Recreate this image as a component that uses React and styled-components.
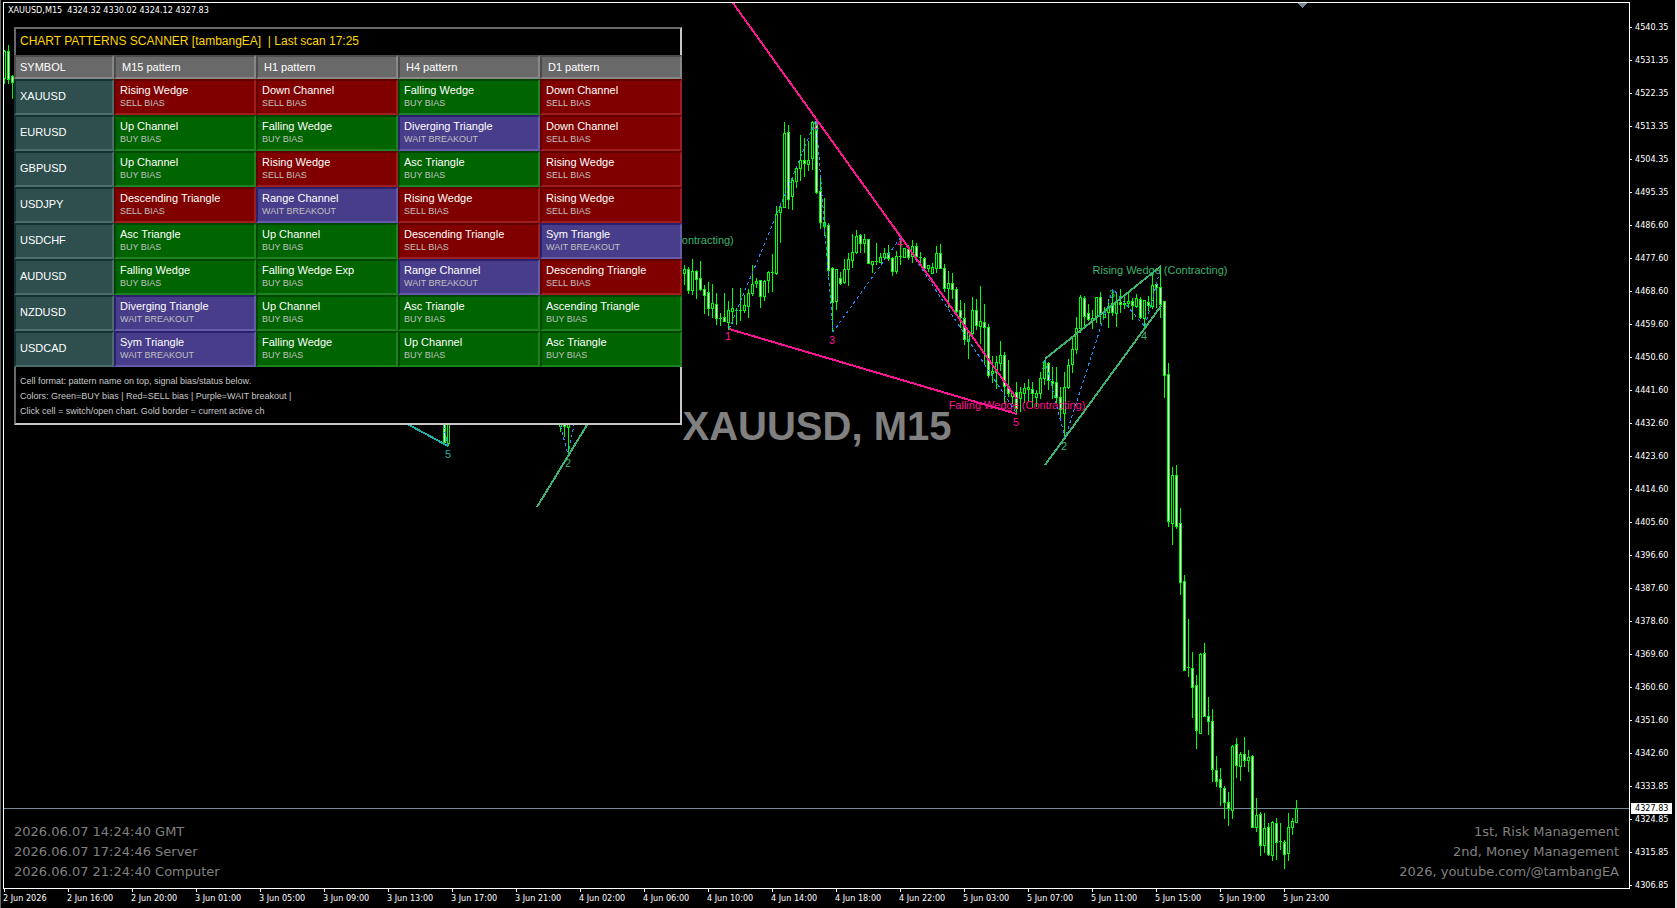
import styled, { createGlobalStyle } from 'styled-components';

const GlobalStyle = createGlobalStyle`
  * { box-sizing: border-box; }
  body { margin: 0; background: #000; }
`;

// background, dark edge (top/left), light edge (right/bottom)
const tones = {
  head: ['#696969', '#4b4b4b', '#878787'],
  symbol: ['#2f4f4f', '#113131', '#4d6d6d'],
  sell: ['#800000', '#620000', '#9e1e1e'],
  buy: ['#006400', '#004600', '#1e821e'],
  wait: ['#483d8b', '#2a1f6d', '#665ba9'],
};

const bias = { sell: 'SELL BIAS', buy: 'BUY BIAS', wait: 'WAIT BREAKOUT' };

const rows = [
  ['XAUUSD', ['Rising Wedge', 'sell'], ['Down Channel', 'sell'], ['Falling Wedge', 'buy'], ['Down Channel', 'sell']],
  ['EURUSD', ['Up Channel', 'buy'], ['Falling Wedge', 'buy'], ['Diverging Triangle', 'wait'], ['Down Channel', 'sell']],
  ['GBPUSD', ['Up Channel', 'buy'], ['Rising Wedge', 'sell'], ['Asc Triangle', 'buy'], ['Rising Wedge', 'sell']],
  ['USDJPY', ['Descending Triangle', 'sell'], ['Range Channel', 'wait'], ['Rising Wedge', 'sell'], ['Rising Wedge', 'sell']],
  ['USDCHF', ['Asc Triangle', 'buy'], ['Up Channel', 'buy'], ['Descending Triangle', 'sell'], ['Sym Triangle', 'wait']],
  ['AUDUSD', ['Falling Wedge', 'buy'], ['Falling Wedge Exp', 'buy'], ['Range Channel', 'wait'], ['Descending Triangle', 'sell']],
  ['NZDUSD', ['Diverging Triangle', 'wait'], ['Up Channel', 'buy'], ['Asc Triangle', 'buy'], ['Ascending Triangle', 'buy']],
  ['USDCAD', ['Sym Triangle', 'wait'], ['Falling Wedge', 'buy'], ['Up Channel', 'buy'], ['Asc Triangle', 'buy']],
];

const prices = [
  '4540.35', '4531.35', '4522.35', '4513.35', '4504.35', '4495.35', '4486.60', '4477.60', '4468.60',
  '4459.60', '4450.60', '4441.60', '4432.60', '4423.60', '4414.60', '4405.60', '4396.60', '4387.60',
  '4378.60', '4369.60', '4360.60', '4351.60', '4342.60', '4333.85', '4324.85', '4315.85', '4306.85',
];

const times = [
  '2 Jun 2026', '2 Jun 16:00', '2 Jun 20:00', '3 Jun 01:00', '3 Jun 05:00', '3 Jun 09:00', '3 Jun 13:00',
  '3 Jun 17:00', '3 Jun 21:00', '4 Jun 02:00', '4 Jun 06:00', '4 Jun 10:00', '4 Jun 14:00', '4 Jun 18:00',
  '4 Jun 22:00', '5 Jun 03:00', '5 Jun 07:00', '5 Jun 11:00', '5 Jun 15:00', '5 Jun 19:00', '5 Jun 23:00',
];

// x, high, low, body top, body bottom, 1 = bull / 0 = bear
const candles = [
  [4, 50, 83, 51, 78, 1], [8, 45, 83, 51, 79, 0], [12, 75, 98, 76, 82, 0],
  [444, 420, 443, 420, 442, 0], [448, 420, 445, 420, 443, 1],
  [560, 420, 431, 420, 426, 1], [564, 420, 436, 420, 426, 0], [568, 420, 453, 420, 427, 1],
  [684, 265, 284, 269, 273, 1], [688, 267, 293, 269, 290, 0], [692, 259, 294, 271, 290, 1],
  [696, 270, 298, 271, 279, 0], [700, 261, 290, 278, 289, 0], [704, 285, 313, 289, 295, 0],
  [708, 282, 315, 292, 308, 0], [712, 284, 317, 303, 308, 1], [716, 293, 324, 304, 318, 0],
  [720, 313, 325, 318, 318, 1], [724, 293, 321, 317, 321, 0], [728, 301, 329, 310, 322, 1],
  [732, 288, 323, 308, 311, 1], [736, 308, 324, 310, 310, 1], [740, 288, 320, 310, 310, 1],
  [744, 295, 312, 305, 310, 1], [748, 289, 317, 293, 306, 1], [752, 265, 295, 284, 293, 1],
  [756, 278, 287, 281, 283, 1], [760, 280, 307, 280, 296, 0], [764, 280, 300, 281, 296, 1],
  [768, 271, 292, 272, 280, 1], [772, 254, 291, 272, 272, 1], [776, 206, 274, 214, 273, 1],
  [780, 203, 242, 207, 212, 1], [784, 122, 207, 133, 207, 1], [788, 125, 208, 132, 199, 0],
  [792, 177, 209, 180, 196, 1], [796, 168, 187, 168, 181, 1], [800, 135, 180, 160, 168, 1],
  [804, 138, 176, 160, 163, 0], [808, 141, 170, 160, 164, 1], [812, 121, 169, 122, 158, 1],
  [816, 119, 193, 122, 192, 0], [820, 176, 228, 191, 222, 0], [824, 198, 235, 222, 226, 0],
  [828, 223, 275, 225, 270, 0], [832, 267, 330, 268, 302, 0], [836, 269, 309, 269, 301, 1],
  [840, 272, 284, 278, 283, 0], [844, 259, 283, 269, 282, 1], [848, 253, 285, 259, 269, 1],
  [852, 234, 267, 252, 260, 1], [856, 230, 253, 236, 252, 1], [860, 234, 252, 235, 243, 0],
  [864, 234, 252, 239, 243, 1], [868, 239, 263, 239, 263, 0], [872, 261, 272, 261, 264, 1],
  [876, 243, 264, 261, 261, 1], [880, 253, 262, 257, 262, 1], [884, 248, 258, 253, 257, 1],
  [888, 245, 260, 253, 258, 0], [892, 257, 275, 258, 271, 0], [896, 251, 273, 256, 271, 1],
  [900, 237, 264, 256, 256, 1], [904, 248, 257, 248, 257, 1], [908, 245, 259, 249, 257, 0],
  [912, 240, 262, 246, 256, 1], [916, 243, 260, 246, 256, 0], [920, 252, 262, 257, 257, 1],
  [924, 257, 268, 258, 268, 0], [928, 265, 271, 265, 268, 1], [932, 263, 273, 267, 273, 1],
  [936, 246, 272, 253, 268, 1], [940, 244, 268, 253, 268, 0], [944, 264, 291, 268, 288, 0],
  [948, 271, 307, 283, 288, 1], [952, 273, 298, 283, 289, 0], [956, 287, 315, 289, 311, 0],
  [960, 300, 327, 310, 317, 0], [964, 303, 344, 318, 339, 0], [968, 332, 358, 332, 341, 1],
  [972, 297, 337, 310, 333, 1], [976, 299, 329, 310, 325, 0], [980, 286, 343, 321, 326, 1],
  [984, 304, 363, 322, 327, 0], [988, 324, 377, 327, 375, 0], [992, 356, 382, 371, 373, 1],
  [996, 356, 388, 362, 372, 1], [1000, 341, 370, 355, 363, 1], [1004, 352, 403, 355, 386, 0],
  [1008, 360, 396, 386, 393, 0], [1012, 392, 403, 392, 396, 1], [1016, 382, 413, 392, 408, 0],
  [1020, 387, 411, 392, 398, 1], [1024, 383, 402, 388, 393, 1], [1028, 379, 400, 387, 389, 1],
  [1032, 382, 407, 389, 393, 0], [1036, 390, 406, 393, 397, 1], [1040, 372, 398, 378, 393, 1],
  [1044, 360, 384, 362, 378, 1], [1048, 362, 389, 363, 380, 0], [1052, 367, 398, 381, 383, 0],
  [1056, 367, 402, 382, 397, 0], [1060, 387, 418, 397, 409, 0], [1064, 372, 438, 387, 413, 1],
  [1068, 359, 388, 365, 387, 1], [1072, 336, 372, 349, 364, 1], [1076, 317, 353, 328, 349, 1],
  [1080, 295, 332, 297, 328, 1], [1084, 296, 325, 298, 316, 0], [1088, 304, 320, 313, 319, 0],
  [1092, 310, 328, 318, 320, 1], [1096, 297, 322, 297, 317, 1], [1100, 292, 323, 297, 314, 0],
  [1104, 307, 317, 312, 317, 1], [1108, 299, 327, 307, 312, 1], [1112, 289, 315, 303, 312, 0],
  [1116, 293, 326, 302, 313, 1], [1120, 289, 312, 302, 304, 0], [1124, 295, 308, 303, 304, 1],
  [1128, 292, 307, 301, 303, 1], [1132, 298, 319, 301, 305, 0], [1136, 294, 307, 298, 306, 1],
  [1140, 297, 318, 299, 317, 0], [1144, 300, 326, 300, 318, 1], [1148, 296, 310, 302, 305, 0],
  [1152, 272, 308, 285, 306, 1], [1156, 282, 307, 284, 287, 0], [1160, 266, 317, 287, 304, 0],
  [1164, 301, 397, 301, 375, 0], [1168, 363, 526, 374, 521, 0], [1172, 467, 544, 475, 523, 1],
  [1176, 465, 528, 475, 526, 0], [1180, 508, 594, 523, 582, 0], [1184, 575, 670, 581, 670, 0],
  [1188, 619, 676, 667, 667, 1], [1192, 652, 717, 668, 687, 0], [1196, 675, 748, 685, 730, 0],
  [1200, 653, 733, 654, 733, 1], [1204, 643, 716, 653, 716, 0], [1208, 697, 734, 716, 721, 0],
  [1212, 709, 781, 721, 769, 0], [1216, 756, 786, 770, 781, 0], [1220, 768, 805, 779, 787, 0],
  [1224, 786, 818, 788, 802, 0], [1228, 792, 825, 802, 808, 0], [1232, 745, 818, 746, 810, 1],
  [1236, 738, 777, 744, 765, 0], [1240, 752, 780, 754, 766, 1], [1244, 737, 766, 754, 760, 0],
  [1248, 750, 771, 757, 760, 1], [1252, 755, 827, 756, 827, 0], [1256, 798, 831, 815, 827, 1],
  [1260, 812, 855, 814, 845, 0], [1264, 813, 852, 828, 845, 1], [1268, 823, 855, 827, 854, 0],
  [1272, 821, 860, 822, 855, 1], [1276, 818, 859, 823, 842, 0], [1280, 823, 849, 841, 841, 1],
  [1284, 840, 868, 842, 854, 0], [1288, 813, 860, 827, 853, 1], [1292, 818, 834, 821, 827, 1],
  [1296, 800, 822, 808, 822, 1],
];

const trendLines = [
  ['733,3 1017,399', '#ff1493'],
  ['729,329 1017,414', '#ff1493'],
  ['1045,359 1161,266', '#3cb371'],
  ['1045,465 1161,306', '#3cb371'],
  ['537,507 590,420', '#3cb371'],
  ['400,420 448,446', '#20b2aa'],
];

const zigzags = [
  '729,329 816,120 833,332 901,237 1017,414',
  '1045,360 1065,438 1113,289 1145,327 1161,267',
  '559,420 568,455 575,420',
  '442,420 448,445',
];

// text, x, baseline, color
const marks = [
  ['1', 728, 340, '#ff1493'], ['2', 816, 129, '#ff1493'], ['3', 832, 344, '#ff1493'],
  ['4', 900, 247, '#ff1493'], ['5', 1016, 426, '#ff1493'],
  ['1', 1044, 369, '#3cb371'], ['2', 1064, 450, '#3cb371'], ['3', 1112, 298, '#3cb371'],
  ['4', 1144, 340, '#3cb371'], ['5', 448, 458, '#20b2aa'], ['2', 568, 467, '#3cb371'],
  ['(Contracting)', 702, 244, '#3cb371'],
  ['Rising Wedge (Contracting)', 1160, 274, '#3cb371'],
  ['Falling Wedge (Contracting)', 1017, 409, '#ff1493'],
];

const Terminal = styled.main`
  display: grid;
  grid-template-columns: minmax(0, 1fr) 45px;
  grid-template-rows: minmax(0, 1fr) 19px;
  height: 100vh;
  min-height: 560px;
  padding: 2px 0 0 2px;
  border-left: 1px solid #696969;
  border-right: 2px solid #e3e3e3;
  background: #000;
  color: #fff;
  font-family: 'Liberation Sans', Arial, sans-serif;
  overflow: hidden;
`;

const Plot = styled.section`
  position: relative;
  display: flex;
  flex-direction: column;
  align-items: flex-start;
  border: 1px solid #fff;
  overflow: hidden;
`;

const Canvas = styled.svg`
  position: absolute;
  top: 0;
  left: 0;
  width: 100%;
  height: 100%;
`;

const ScaleText = styled.span`
  font: 9px/15px 'DejaVu Sans Condensed', Tahoma, sans-serif;
  white-space: pre;
`;

const Quote = styled(ScaleText)`
  position: relative;
  margin: 0 0 9px 4px;
`;

const Scanner = styled.section`
  position: relative;
  width: 668px;
  max-width: calc(100% - 20px);
  margin-left: 10px;
  background: #000;
`;

const Title = styled.h1`
  margin: 0;
  height: 28px;
  padding-left: 4px;
  border: solid #696969;
  border-width: 2px 2px 0;
  border-right-color: #c8c8c8;
  color: #ffd700;
  font-size: 12px;
  font-weight: 400;
  line-height: 24px;
  white-space: pre;
`;

const Grid = styled.table`
  width: 100%;
  table-layout: fixed;
  border-spacing: 0;
  font-size: 11px;
`;

const Cell = styled.td`
  height: 36px;
  padding: 0 4px;
  border: 2px solid;
  border-color: ${(p) => `${tones[p.$tone][1]} ${tones[p.$tone][2]} ${tones[p.$tone][2]} ${tones[p.$tone][1]}`};
  background: ${(p) => tones[p.$tone][0]};
  line-height: 12px;
  text-align: left;
  white-space: nowrap;
`;

const HeadCell = styled(Cell)`
  height: 24px;
  width: ${(p) => (p.$first ? '100px' : 'auto')};
  padding-left: ${(p) => (p.$first ? '4px' : '6px')};
  font-weight: 400;
`;

const SymbolCell = styled(Cell)`
  padding-bottom: 2px;
  font-weight: 400;
`;

const Bias = styled.div`
  color: #c0c0c0;
  font-size: 9px;
  line-height: 14px;
`;

const Notes = styled.div`
  height: 58px;
  padding: 7px 0 0 4px;
  border: solid #c8c8c8;
  border-width: 0 2px 2px;
  border-left-color: #696969;
  color: #c8c8c8;
  font-size: 9px;
  line-height: 15px;

  p { margin: 0; }
`;

const Corners = styled.footer`
  position: relative;
  align-self: stretch;
  display: flex;
  justify-content: space-between;
  margin-top: auto;
  padding: 0 10px 6px;
  color: #808080;
  font: 13px/20px 'DejaVu Sans', Verdana, sans-serif;

  div:last-child { text-align: right; }
`;

const PriceScale = styled.aside`
  position: relative;
  padding-top: 9px;
`;

const Price = styled(ScaleText)`
  display: flex;
  align-items: center;
  height: 33px;

  &::before {
    content: '';
    width: 2px;
    height: 1px;
    margin-right: 3px;
    background: #fff;
  }
`;

const PriceTag = styled(ScaleText)`
  position: absolute;
  top: 801px;
  left: 1px;
  width: 41px;
  padding-left: 4px;
  background: #fff;
  color: #000;
  line-height: 11px;
`;

const TimeScale = styled.div`
  display: flex;
  grid-column: 1 / -1;
  overflow: hidden;
`;

const Time = styled(ScaleText)`
  flex: 0 0 64px;
  line-height: 13px;

  &::before {
    content: '';
    display: block;
    width: 1px;
    height: 3px;
    margin-left: 1px;
    background: #fff;
  }
`;

function Candle({ x, high, low, top, bottom, bull }) {
  return (
    <g>
      <rect x={x} y={high} width="1" height={low - high + 1} fill="#00ff00" />
      <rect x={x - 1} y={top} width="3" height={bottom - top + 1} fill="#00ff00" />
      {bottom - top > 1 && (
        <rect x={x} y={top + 1} width="1" height={bottom - top - 1} fill={bull ? '#000' : '#fff'} />
      )}
    </g>
  );
}

function Chart() {
  return (
    <Canvas viewBox="4 3 1625 885" preserveAspectRatio="xMinYMin meet" aria-label="XAUUSD M15 chart">
      <text x="817" y="440" textAnchor="middle" fill="#808080" fontSize="40" fontWeight="700">XAUUSD, M15</text>
      <g shapeRendering="crispEdges">
        <rect x="4" y="808" width="1625" height="1" fill="#778899" />
        <path d="M1298 3h9v1h-1v1h-1v1h-1v1h-1v1h-1v-1h-1v-1h-1v-1h-1v-1h-1z" fill="#778899" />
        {candles.map(([x, high, low, top, bottom, bull]) => (
          <Candle key={x} x={x} high={high} low={low} top={top} bottom={bottom} bull={bull} />
        ))}
      </g>
      {marks.map(([text, x, y, color]) => (
        <text key={text + x} x={x} y={y} textAnchor="middle" fill={color} fontSize="11">{text}</text>
      ))}
      <g fill="none" shapeRendering="crispEdges">
        {zigzags.map((points) => (
          <polyline key={points} points={points} stroke="#1e90ff" strokeDasharray="3 3" />
        ))}
        {trendLines.map(([points, color]) => (
          <polyline key={points} points={points} stroke={color} strokeWidth="2" />
        ))}
      </g>
    </Canvas>
  );
}

function PatternScanner() {
  return (
    <Scanner>
      <Title>{'CHART PATTERNS SCANNER [tambangEA]  | Last scan 17:25'}</Title>
      <Grid>
        <thead>
          <tr>
            <HeadCell as="th" $tone="head" $first>SYMBOL</HeadCell>
            {['M15', 'H1', 'H4', 'D1'].map((tf) => (
              <HeadCell as="th" $tone="head" key={tf}>{tf} pattern</HeadCell>
            ))}
          </tr>
        </thead>
        <tbody>
          {rows.map(([symbol, ...cells]) => (
            <tr key={symbol}>
              <SymbolCell as="th" scope="row" $tone="symbol">{symbol}</SymbolCell>
              {cells.map(([pattern, signal], i) => (
                <Cell $tone={signal} key={i}>
                  {pattern}
                  <Bias>{bias[signal]}</Bias>
                </Cell>
              ))}
            </tr>
          ))}
        </tbody>
      </Grid>
      <Notes>
        <p>Cell format: pattern name on top, signal bias/status below.</p>
        <p>Colors: Green=BUY bias | Red=SELL bias | Purple=WAIT breakout |</p>
        <p>Click cell = switch/open chart. Gold border = current active ch</p>
      </Notes>
    </Scanner>
  );
}

export default function App() {
  return (
    <>
      <GlobalStyle />
      <Terminal>
        <Plot>
          <Chart />
          <Quote>{'XAUUSD,M15  4324.32 4330.02 4324.12 4327.83'}</Quote>
          <PatternScanner />
          <Corners>
            <div>
              <div>2026.06.07 14:24:40 GMT</div>
              <div>2026.06.07 17:24:46 Server</div>
              <div>2026.06.07 21:24:40 Computer</div>
            </div>
            <div>
              <div>1st, Risk Management</div>
              <div>2nd, Money Management</div>
              <div>2026, youtube.com/@tambangEA</div>
            </div>
          </Corners>
        </Plot>
        <PriceScale>
          {prices.map((price) => <Price key={price}>{price}</Price>)}
          <PriceTag>4327.83</PriceTag>
        </PriceScale>
        <TimeScale>
          {times.map((time) => <Time key={time}>{time}</Time>)}
        </TimeScale>
      </Terminal>
    </>
  );
}
